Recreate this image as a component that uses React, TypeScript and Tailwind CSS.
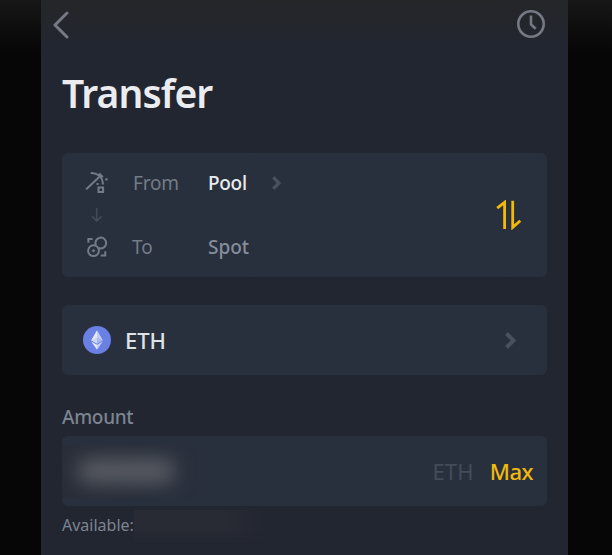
const Chevron = ({ className }) => {
  return (
    <svg className={className} fill="none" viewBox="0 0 11 17">
      <path stroke="currentColor" strokeWidth="4" d="M1.5 1.5l7 7-7 7" />
    </svg>
  );
};

const PickaxeIcon = () => {
  return (
    <svg className="w-6 h-6 text-[#737b88]" fill="none" viewBox="0 0 24 24">
      <path
        stroke="currentColor"
        strokeWidth="2"
        d="M1.2 18.2L15.8 4.6M5.7 1.9c7.5.2 12.2 4.6 12.2 11.6M14.2 2.4l3.7 3.7"
      />
      <path stroke="currentColor" strokeWidth="2" d="M13.5 16.5h4.6v4.6h-4.6z" />
      <path
        fill="currentColor"
        d="M11.6 12h2v2h-2zM20.3 7.3h2.2v2.2h-2.2z"
      />
    </svg>
  );
};

const CoinsIcon = () => {
  return (
    <svg className="w-6 h-6 text-[#737b88]" fill="none" viewBox="0 0 24 24">
      <g stroke="currentColor" strokeWidth="2">
        <circle cx="8.5" cy="15.7" r="5.4" />
        <path d="M10.9 10.3a5.4 5.4 0 1 1 2.8 2.7" />
        <path d="M3.4 7.8V4h4.2M20.3 16.2v4.3h-4.6" />
      </g>
      <path fill="currentColor" d="M8.5 13.9l1.8 1.8-1.8 1.8-1.8-1.8z" />
    </svg>
  );
};

const EthLogo = () => {
  return (
    <svg className="w-7 h-7" viewBox="0 0 28 28">
      <circle cx="14" cy="14" r="14" fill="#6a80e4" />
      <path fill="#e4e7f6" d="M14 4.3L8.2 14.2 14 17.6z" />
      <path fill="#c6cff3" d="M14 4.3l5.8 9.9-5.8 3.4z" />
      <path fill="#cfd6f3" d="M8.2 14.2L14 11.6v6z" />
      <path fill="#a9b7ee" d="M19.8 14.2L14 11.6v6z" />
      <path fill="#e4e7f6" d="M8.2 15.5l5.8 3.3v5z" />
      <path fill="#c6cff3" d="M19.8 15.5L14 18.8v5z" />
    </svg>
  );
};

const Header = () => {
  return (
    <div className="flex justify-between items-center h-12 pl-3 pr-[23px] text-[#747984]">
      <svg className="w-4 h-7 mt-0.5" fill="none" viewBox="0 0 16 28">
        <path
          stroke="currentColor"
          strokeWidth="3"
          strokeLinecap="round"
          strokeLinejoin="round"
          d="M14 2L2 14l12 12"
        />
      </svg>
      <svg className="w-7 h-7" fill="none" viewBox="0 0 28 28">
        <circle cx="14" cy="14" r="12.7" stroke="currentColor" strokeWidth="2.6" />
        <path stroke="currentColor" strokeWidth="2.6" d="M14 5.5V14.5l4.7 4.2" />
      </svg>
    </div>
  );
};

const Route = () => {
  return (
    <div className="flex justify-between items-center h-[124px] mt-10 pl-[23px] pr-[25px] rounded-md bg-[#29303d]">
      <div className="text-[19px] leading-8">
        <div className="flex items-center h-8">
          <PickaxeIcon />
          <span className="w-[75px] ml-6 text-[#737b88] tracking-[-0.2px]">From</span>
          <span className="w-16 font-medium text-[#eaecef] tracking-[-0.3px]">Pool</span>
          <Chevron className="w-[9px] h-3.5 text-[#48515d]" />
        </div>
        <svg className="w-6 h-8 text-[#414a57]" fill="none" viewBox="0 0 24 32">
          <path
            stroke="currentColor"
            strokeWidth="1.7"
            d="M11.7 9v13M7 17.3l4.7 4.7 4.7-4.7"
          />
        </svg>
        <div className="flex items-center h-8">
          <CoinsIcon />
          <span className="w-[76px] ml-[23px] text-[#737b88]">To</span>
          <span className="font-medium text-[#848e9c]">Spot</span>
        </div>
      </div>
      <svg className="w-[26px] h-[30px] text-[#f0b90b]" fill="none" viewBox="0 0 26 30">
        <path
          stroke="currentColor"
          strokeWidth="2.8"
          d="M1.2 8.2L8.6 2.3V29M16.7.8v26.6l7.6-6.6"
        />
      </svg>
    </div>
  );
};

const App = () => {
  return (
    <div className="w-full h-[555px] overflow-hidden bg-[#060606] bg-linear-to-b from-[#171717] from-0% to-[#060606] to-10% font-['Noto_Sans',sans-serif]">
      <div className="w-[527px] h-full ml-[41px] bg-linear-to-b from-[#252628] to-[#222630] to-8%">
        <Header />
        <div className="pl-[21px] pr-[21px]">
          <h1 className="mt-[25px] text-[39px] leading-10 font-semibold text-[#eaecef] tracking-[-0.9px]">
            Transfer
          </h1>
          <Route />
          <div className="flex items-center h-[70px] mt-7 pl-[21px] pr-[31px] rounded-md bg-[#29303d]">
            <EthLogo />
            <span className="ml-3.5 grow text-[22px] leading-8 font-medium text-[#dfe2e6]">
              ETH
            </span>
            <Chevron className="w-[11px] h-[17px] text-[#48515d]" />
          </div>
          <div className="mt-[28px] text-[19px] leading-7 font-medium text-[#7c8491] tracking-[-0.3px]">
            Amount
          </div>
          <div className="h-[70px] mt-[5px] pt-[5px] rounded-md bg-[#29303d]">
            <div className="flex items-center h-[60px] pr-3.5">
              <div className="flex items-center w-[150px] h-[53px] pl-4 overflow-hidden bg-linear-to-r from-[#282d37] to-[#29303d]">
                <div className="w-24 h-6 rounded-lg bg-[#5b5e65] blur-[10px]" />
              </div>
              <span className="ml-auto text-[22px] leading-8 text-[#434c59] tracking-[0.2px]">ETH</span>
              <span className="ml-4 text-[22px] leading-8 font-medium text-[#f0b90b] tracking-[-0.5px]">
                Max
              </span>
            </div>
          </div>
          <div className="flex h-[34px] mt-1 text-[16px] leading-[30px] text-[#7c8491]">
            Available:
            <div className="w-[130px] h-full bg-linear-to-r from-[#282b34] from-70% to-[#222630] mask-b-from-60%" />
          </div>
        </div>
      </div>
    </div>
  );
};

export default App;
